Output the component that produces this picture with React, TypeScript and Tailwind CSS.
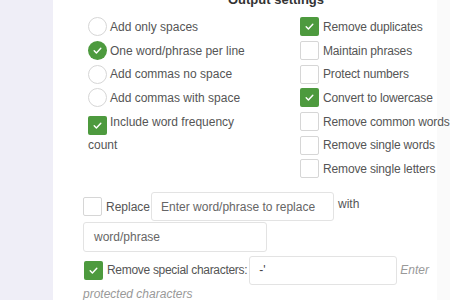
import React from 'react'

const GREEN = 'bg-[#4d9a3e]'

const Check = () => (
  <svg viewBox="0 0 20 20" className="w-[11px] h-[11px]" fill="none">
    <path d="M4 10.5l4 4 8-8.5" stroke="white" strokeWidth="2.6" strokeLinecap="round" strokeLinejoin="round" />
  </svg>
)

const Box = ({ checked }: { checked?: boolean }) =>
  checked ? (
    <span className={`inline-flex shrink-0 w-[19px] h-[19px] rounded-[2px] ${GREEN} items-center justify-center`}>
      <Check />
    </span>
  ) : (
    <span className="inline-flex shrink-0 w-[19px] h-[19px] rounded-[2px] border border-[#d6d6d6] bg-white" />
  )

const Radio = ({ checked }: { checked?: boolean }) =>
  checked ? (
    <span className={`inline-flex shrink-0 w-[19px] h-[19px] rounded-full ${GREEN} items-center justify-center`}>
      <Check />
    </span>
  ) : (
    <span className="inline-flex shrink-0 w-[19px] h-[19px] rounded-full border border-[#d6d6d6] bg-white" />
  )

const radios = [
  { label: 'Add only spaces' },
  { label: 'One word/phrase per line', checked: true },
  { label: 'Add commas no space' },
  { label: 'Add commas with space' },
]

const options = [
  { label: 'Remove duplicates', checked: true },
  { label: 'Maintain phrases' },
  { label: 'Protect numbers' },
  { label: 'Convert to lowercase', checked: true },
  { label: 'Remove common words' },
  { label: 'Remove single words' },
  { label: 'Remove single letters' },
]

export default function App() {
  return (
    <div className="flex w-[450px] h-[300px] overflow-hidden bg-white text-[12px] text-[#555] font-['Liberation_Sans',Arial,sans-serif]">
      {/* left nav strip */}
      <div className="w-[53px] shrink-0 bg-[#efeef7]" />

      {/* settings panel */}
      <main className="relative z-10 w-[384px] shrink-0 bg-white flex flex-col">
        <h2 className="mt-[-8px] h-[16px] leading-[16px] text-center font-bold text-[13px] text-[#333] pl-[62px]">
          Output settings
        </h2>

        <div className="flex mt-[7px]">
          {/* left column */}
          <div className="pl-[35px] w-[247px] shrink-0 flex flex-col">
            {radios.map((r) => (
              <div key={r.label} className="flex items-center gap-[3px] h-[23.7px] whitespace-nowrap">
                <Radio checked={r.checked} />
                <span>{r.label}</span>
              </div>
            ))}
            <div className="mt-[3px] w-[152px] leading-[18px]">
              <span className="inline-block align-[-5px] mr-[3px]">
                <Box checked />
              </span>
              Include word frequency count
            </div>
          </div>

          {/* right column */}
          <div className="flex flex-col shrink-0">
            {options.map((o) => (
              <div key={o.label} className="flex items-center gap-[4px] h-[23.7px] whitespace-nowrap">
                <Box checked={o.checked} />
                <span className="tracking-[-0.15px]">{o.label}</span>
              </div>
            ))}
          </div>
        </div>

        {/* replace */}
        <div className="pl-[30px] mt-[12px] flex flex-col whitespace-nowrap">
          <div className="flex items-center h-[28px]">
            <Box />
            <span className="ml-[4px] mr-[1px]">Replace</span>
            <div className="w-[183px] h-[29px] shrink-0 rounded-[3px] border border-[#e3e3e3] flex items-center pl-[9px] text-[#666]">
              Enter word/phrase to replace
            </div>
            <span className="ml-[4px] mt-[-6px]">with</span>
          </div>
          <div className="mt-[1px] w-[184px] h-[30px] rounded-[3px] border border-[#e3e3e3] flex items-center pl-[10px] text-[#666]">
            word/phrase
          </div>

          <div className="flex items-center mt-[4px] h-[29px] pl-[1px]">
            <Box checked />
            <span className="ml-[4px] tracking-[-0.3px]">Remove special characters:</span>
            <div className="ml-[2px] w-[148px] h-[29px] shrink-0 rounded-[3px] border border-[#e3e3e3] flex items-center pl-[9px] text-[#444]">
              -'
            </div>
            <span className="ml-[3px] italic text-[#999]">Enter</span>
          </div>
          <div className="italic text-[#999] leading-[16px] mt-[1px]">protected characters</div>
        </div>
      </main>

      {/* right edge */}
      <div className="flex-1 bg-[#fafafa]" />
    </div>
  )
}
